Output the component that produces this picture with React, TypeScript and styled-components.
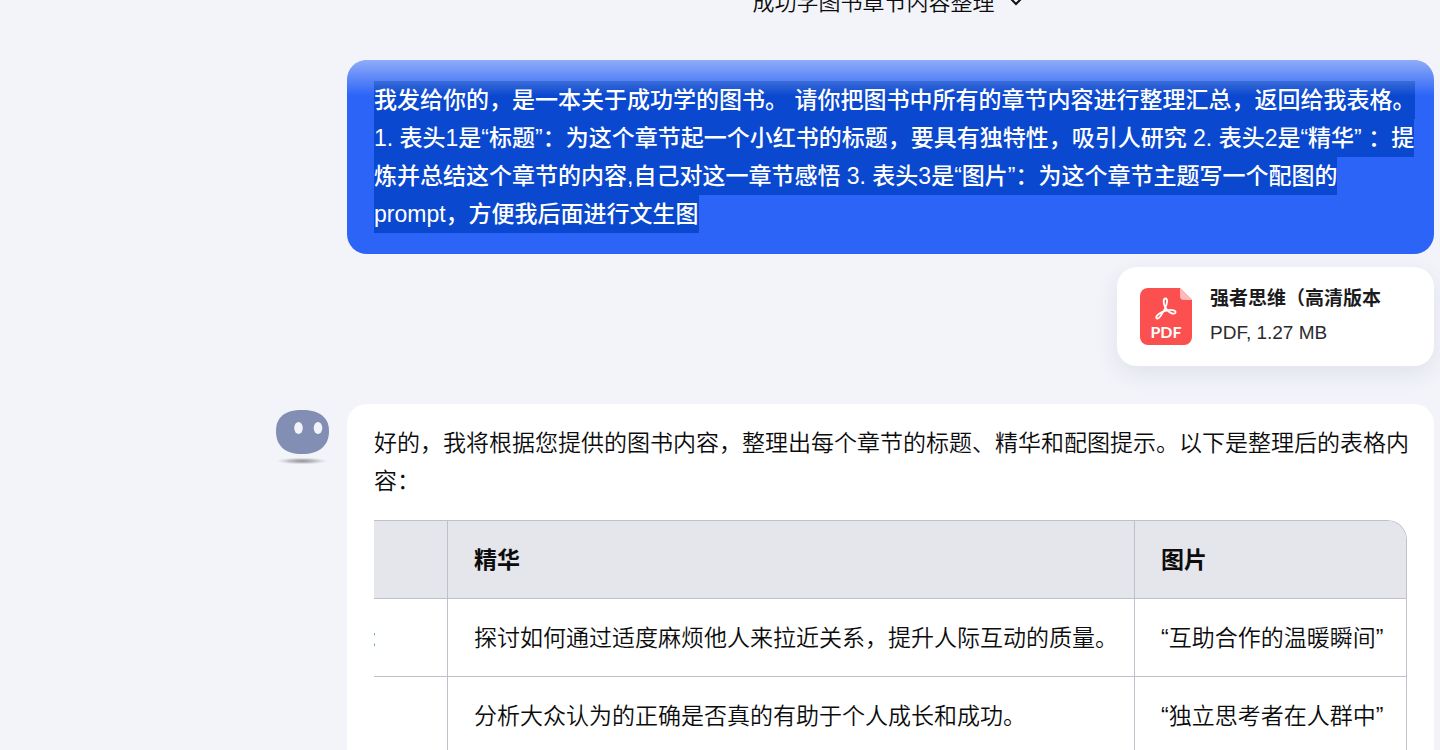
import React from "react";
import styled, { createGlobalStyle } from "styled-components";

const GlobalStyle = createGlobalStyle`
  * { box-sizing: border-box; }
  body {
    margin: 0;
    background: #f3f4fa;
    color: #0c0c0d;
    font-family: "Liberation Sans", "Noto Sans CJK SC", sans-serif;
    font-size: 23px;
    line-height: 38px;
  }
`;

const Page = styled.div`
  height: 100vh;
  overflow: hidden;
  padding: 0 6px 0 275px;
`;

const Header = styled.header`
  display: flex;
  justify-content: center;
  height: 60px;
  padding-left: 66px;
`;

const TitleButton = styled.button`
  display: flex;
  align-items: center;
  gap: 14px;
  height: 38px;
  margin-top: -16px;
  padding: 0;
  border: 0;
  background: none;
  color: #0c0c0d;
  font: inherit;
  font-size: 22px;
  font-weight: 350;
`;

const Thread = styled.main`
  display: flex;
  flex-direction: column;
`;

const UserTurn = styled.section`
  display: flex;
  flex-direction: column;
  align-items: flex-end;
  gap: 13px;
  margin-bottom: 38px;
  padding-left: 72px;
`;

const Bubble = styled.div`
  position: relative;
  width: 100%;
  padding: 21px 27px;
  border-radius: 20px;
  overflow: hidden;
  background: #2c64f7;
  color: #fff;
  font-weight: 500;

  &::after {
    content: "";
    position: absolute;
    inset: 0 0 auto;
    height: 36px;
    background: linear-gradient(rgba(243, 244, 250, 0.5), rgba(243, 244, 250, 0));
  }
`;

const SelectedLine = styled.span`
  display: block;
  width: fit-content;
  background: #0a48d0;
  white-space: nowrap;
`;

const FileCard = styled.a`
  display: flex;
  align-items: center;
  gap: 18px;
  width: 317px;
  height: 99px;
  padding: 0 23px;
  border-radius: 20px;
  background: #fff;
  box-shadow: 0 8px 24px rgba(30, 40, 80, 0.09);
  color: #1c1c1e;
  text-decoration: none;
`;

const FileText = styled.span`
  display: flex;
  flex-direction: column;
  padding-bottom: 2px;
  font-size: 19px;
  line-height: 34px;
  white-space: nowrap;
`;

const FileName = styled.strong`
  font-weight: 700;
`;

const FileMeta = styled.span`
  color: #2b2b2e;
`;

const BotTurn = styled.section`
  display: flex;
  align-items: flex-start;
  gap: 18px;
`;

const Avatar = styled.svg`
  flex: none;
  margin-top: 5px;
`;

const Answer = styled.div`
  flex: 1;
  min-width: 0;
  min-height: 400px;
  padding: 20px 27px;
  border-radius: 20px;
  background: #fff;
  font-weight: 350;
`;

const Intro = styled.p`
  margin: 0 0 20px;
`;

const IntroLine = styled.span`
  display: block;
  white-space: nowrap;
`;

const TableScroller = styled.div`
  display: flex;
  justify-content: flex-end;
  overflow: hidden;
`;

const Table = styled.table`
  flex: none;
  width: calc(100% + 4px);
  table-layout: fixed;
  border-collapse: separate;
  border-spacing: 0;
  border-top: 1px solid #bfc0cc;
  border-right: 1px solid #bfc0cc;
  border-radius: 0 20px 0 0;
  overflow: hidden;
`;

const cell = `
  height: 78px;
  padding: 0 26px;
  border-bottom: 1px solid #bfc0cc;
  text-align: left;
  white-space: nowrap;

  & + & { border-left: 1px solid #bfc0cc; }
  &:first-child { padding: 0; }
`;

const HeadCell = styled.th<{ $width?: number }>`
  ${cell}
  width: ${(p) => (p.$width ? `${p.$width}px` : "auto")};
  background: #e5e6eb;
  font-weight: 700;
`;

const Cell = styled.td`
  ${cell}
`;

const rows = [
  [":", "探讨如何通过适度麻烦他人来拉近关系，提升人际互动的质量。", "“互助合作的温暖瞬间”"],
  ["", "分析大众认为的正确是否真的有助于个人成长和成功。", "“独立思考者在人群中”"],
];

const promptLines = [
  "我发给你的，是一本关于成功学的图书。 请你把图书中所有的章节内容进行整理汇总，返回给我表格。",
  "1. 表头1是“标题”：为这个章节起一个小红书的标题，要具有独特性，吸引人研究 2. 表头2是“精华” ：提",
  "炼并总结这个章节的内容,自己对这一章节感悟 3. 表头3是“图片”：为这个章节主题写一个配图的",
  "prompt，方便我后面进行文生图",
];

const PdfIcon = () => (
  <svg width="52" height="57" viewBox="0 0 52 57" aria-hidden="true">
    <path d="M8 0H40L52 12V49a8 8 0 0 1-8 8H8a8 8 0 0 1-8-8V8a8 8 0 0 1 8-8Z" fill="#fb4f50" />
    <path d="M40 0L52 12H44a4 4 0 0 1-4-4Z" fill="#ffb9b9" />
    <path
      d="M25.500 10.500C23 10.500 23.300 15 25 19C27.300 24 33.500 27 35.300 25C36.800 22.500 32 21.300 27 22.300C21 23.500 15.500 27.500 16.300 30C18 32.500 22.500 26 25 20.500C27.300 15.500 28 10.500 25.500 10.500Z"
      fill="none"
      stroke="#fff"
      strokeWidth="1.800"
      strokeLinejoin="round"
    />
    <text x="26" y="50" textAnchor="middle" fill="#fff" fontFamily="Lato, sans-serif" fontWeight="700" fontSize="16">
      PDF
    </text>
  </svg>
);

const BotAvatar = () => (
  <Avatar width="54" height="56" viewBox="0 0 54 56" role="img" aria-label="助手">
    <defs>
      <radialGradient id="ground">
        <stop offset="0" stopColor="#8f9094" />
        <stop offset="0.5" stopColor="#a9aaaf" stopOpacity="0.7" />
        <stop offset="1" stopColor="#c9cacf" stopOpacity="0" />
      </radialGradient>
    </defs>
    <ellipse cx="27" cy="52" rx="26" ry="3.500" fill="url(#ground)" />
    <path d="M27 1C44 1 54 8 54 22C54 37 44 45 27 45C10 45 1 37 1 22C1 8 10 1 27 1Z" fill="#828eb3" />
    <ellipse cx="23.500" cy="19" rx="4.300" ry="6" fill="#f3f4fa" />
    <ellipse cx="43" cy="19" rx="4.300" ry="6" fill="#f3f4fa" />
  </Avatar>
);

export default function App() {
  return (
    <>
      <GlobalStyle />
      <Page>
        <Header>
          <TitleButton type="button">
            成功学图书章节内容整理
            <svg width="14" height="10" viewBox="0 0 14 10" fill="none" stroke="#111" strokeWidth="2" aria-hidden="true">
              <path d="M2 1l5 5 5-5" />
            </svg>
          </TitleButton>
        </Header>
        <Thread>
          <UserTurn>
            <Bubble>
              {promptLines.map((line) => (
                <SelectedLine key={line}>{line}</SelectedLine>
              ))}
            </Bubble>
            <FileCard href="#file">
              <PdfIcon />
              <FileText>
                <FileName>强者思维（高清版本</FileName>
                <FileMeta>PDF, 1.27 MB</FileMeta>
              </FileText>
            </FileCard>
          </UserTurn>
          <BotTurn>
            <BotAvatar />
            <Answer>
              <Intro>
                <IntroLine>好的，我将根据您提供的图书内容，整理出每个章节的标题、精华和配图提示。以下是整理后的表格内</IntroLine>
                <IntroLine>容：</IntroLine>
              </Intro>
              <TableScroller>
                <Table>
                  <thead>
                    <tr>
                      <HeadCell $width={77} />
                      <HeadCell>精华</HeadCell>
                      <HeadCell $width={272}>图片</HeadCell>
                    </tr>
                  </thead>
                  <tbody>
                    {rows.map((row) => (
                      <tr key={row[1]}>
                        {row.map((text, i) => (
                          <Cell key={i}>{text}</Cell>
                        ))}
                      </tr>
                    ))}
                  </tbody>
                </Table>
              </TableScroller>
            </Answer>
          </BotTurn>
        </Thread>
      </Page>
    </>
  );
}
